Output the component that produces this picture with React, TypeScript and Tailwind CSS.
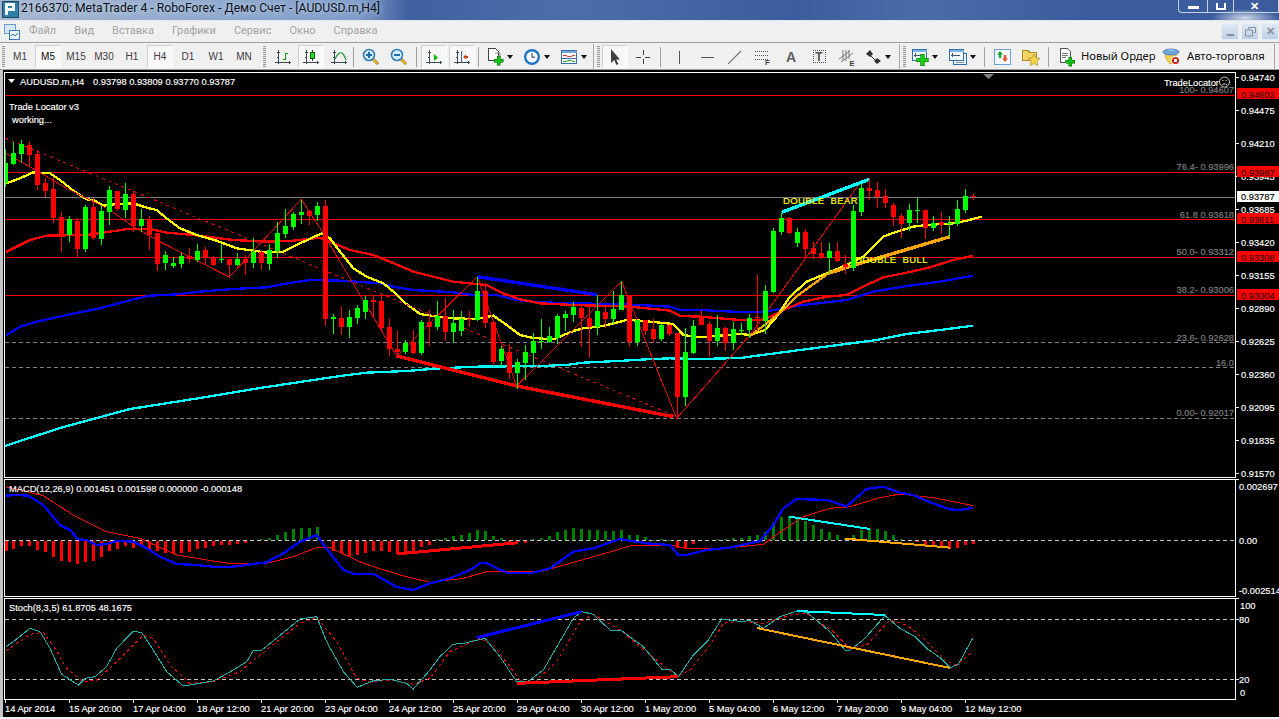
import React from "react";

type P = [number, number];
const zm = (ox: number, oy: number, a: P[]) => a.map(([x, y]) => `${ox + x / 3},${oy + y / 3}`).join(" ");
const join = (...s: string[]) => s.join(" ");
const C = "crispEdges" as const;

// [up?, high, top, bottom, low] in zoomed pixels, grouped by crop origin
const seg1: number[][] = [[1,58,100,158,170],[1,36,68,102,106],[1,30,42,72,96],[0,34,44,75,110],[0,60,72,164,180],[0,145,158,183,202],[0,145,177,264,280],[0,245,261,316,366],[1,258,267,316,336],[0,265,273,357,382],[1,225,231,357,366],[0,205,231,325,330],[1,225,243,327,345],[1,168,180,245,285],[0,183,183,237,243],[1,159,192,240,264],[0,183,192,288,306],[1,237,267,288,306],[0,258,267,315,360],[0,308,309,402,423],[1,363,375,399,420],[1,381,399,408,414],[1,369,378,402,414],[0,354,378,387,399],[1,342,363,390,396],[0,351,360,384,405],[0,378,384,405,408],[1,342,387,390,399],[0,387,387,405,441],[1,369,387,405,408],[0,375,387,399,435],[1,324,366,399,414],[0,360,366,399,420],[1,342,360,402,420],[1,276,309,363,384],[1,237,288,312,324],[1,246,252,291,300],[1,210,246,255,282],[0,240,243,258,285],[1,216,228,255,273],[0,210,228,567,588],[1,552,561,567,612]];
const seg2: number[][] = [[0,171,204,231,255],[1,180,201,231,264],[1,165,174,204,222],[1,138,150,186,207],[0,138,150,156,198],[0,138,153,234,243],[0,207,231,297,318],[0,243,297,305,321],[1,270,279,306,312],[0,240,276,309,312],[1,210,216,309,315],[0,180,216,231,288],[1,153,198,231,240],[0,144,198,246,273],[1,180,219,246,279],[1,183,207,243,258],[0,183,207,210,231],[1,81,123,210,213],[0,99,123,219,234],[0,210,216,336,348],[1,288,297,333,351],[0,282,306,369,387],[1,327,336,369,417],[1,285,306,339,390],[1,249,273,309,345],[1,207,273,276,297],[1,231,258,276,279],[1,192,198,264,282],[1,183,192,204,243],[1,156,171,195,216],[0,165,174,204,291],[0,165,204,231,321],[1,135,183,231,255],[0,168,186,207,234],[1,123,177,207,222],[1,93,135,180,180],[0,135,138,276,291],[1,210,210,276,288],[0,210,210,243,255],[0,207,237,267,279],[1,222,225,267,273],[0,222,225,252,258],[0,249,249,441,507],[1,234,306,441,468],[1,210,228,309,312]];
const seg3: number[][] = [[0,120,140,165,165],[0,153,162,212,260],[1,135,174,213,228],[0,170,174,219,243],[1,155,177,219,240],[1,160,179,181,195],[1,132,144,180,204],[0,15,141,144,184],[1,45,63,153,192]];
const seg4: number[][] = [[1,205,213,396,400],[1,160,174,216,225],[0,170,174,219,222],[1,204,216,249,261],[0,207,216,267,291],[0,246,264,282,297],[0,246,279,294,297],[1,249,273,294,342],[0,246,273,303,306],[0,285,312,321,342],[1,135,153,324,333],[1,72,84,156,168],[0,54,84,93,120],[0,66,90,111,144],[0,87,108,129,144],[0,129,135,171,198],[0,159,168,192,234],[1,132,150,189,213],[1,114,150,153,189],[0,150,150,204,237],[1,168,189,204,213],[0,156,186,195,222],[1,168,189,192,231],[1,120,147,192,198],[1,87,108,150,159],[0,102,108,111,120]];
const candles = [
  ...seg1.map((c) => ({ c, o: 130 })),
  ...seg2.map((c) => ({ c, o: 250 })),
  ...seg3.map((c) => ({ c, o: 270 })),
  ...seg4.map((c) => ({ c, o: 160 })),
];

const yellow = join(
  zm(0, 130, [[18,160],[60,145],[100,127],[150,130],[180,150],[215,178],[260,208],[280,210],[310,227],[350,222],[400,220],[440,233],[470,240],[500,265],[540,295],[590,315],[650,332],[710,355],[760,362],[800,368],[850,365],[900,340],[965,310],[990,325],[1020,365]]),
  zm(340, 250, [[40,55],[80,80],[130,100],[160,125],[190,155],[240,192],[280,198],[340,205],[410,207],[460,197],[500,225],[540,255],[580,264],[640,268],[700,243],[730,235],[790,228],[860,210],[900,212],[1000,222],[1030,255],[1080,262]]),
  zm(740, 160, [[0,522],[30,525],[75,510],[110,470],[150,410],[200,365],[260,340],[320,315],[370,290],[430,230],[470,215],[520,200],[560,195],[640,190],[680,182],[725,170]])
);
const redMa = join(
  zm(0, 130, [[18,366],[50,350],[90,330],[140,317],[260,315],[330,305],[390,296],[450,297],[500,308],[580,315],[700,330],[800,335],[870,333],[960,323],[990,335]]),
  zm(340, 250, [[30,0],[100,15],[150,35],[220,65],[340,95],[440,105],[490,130],[540,148],[600,160],[700,165],[870,170],[990,182],[1020,198],[1080,200]]),
  zm(740, 160, [[0,480],[70,480],[130,450],[190,425],[260,410],[320,405],[380,375],[430,352],[500,338],[570,322],[640,300],[700,287]])
);
const blueMa = join(
  zm(0, 130, [[18,617],[60,590],[110,575],[200,555],[300,535],[400,508],[450,497],[530,493],[600,485],[700,477],[800,472],[850,462],[930,450],[1020,452]]),
  zm(340, 250, [[50,95],[120,100],[170,112],[220,120],[340,127],[400,135],[470,135],[530,150],[600,157],[720,160],[900,165],[990,170],[1020,180],[1080,180]]),
  zm(740, 160, [[0,456],[70,456],[130,445],[190,435],[320,420],[400,395],[500,378],[600,365],[700,347]])
);
const cyanMa = join(
  "5,446 60,428 130,409 200,398 260,388 320,379",
  zm(340, 250, [[0,378],[80,368],[200,363],[300,355],[410,350],[600,348],[680,345],[730,338],[850,332],[920,328],[990,325],[1080,327]]),
  "740,358 800,350",
  zm(740, 160, [[410,540],[500,522],[600,510],[700,497]])
);
const zig = join(
  zm(0, 130, [[18,70],[115,125],[200,175],[330,240],[400,290],[470,330],[688,441],[904,208],[970,310],[1020,395]]),
  zm(340, 250, [[170,318],[412,80],[530,408],[845,95],[1010,505]]),
  "750,335 860,183"
);
const macdBlue = join(
  zm(0, 475, [[18,62],[50,60],[85,62],[130,90],[180,150],[210,165],[235,193],[260,195],[290,210],[320,207],[350,198],[400,200],[440,220],[480,245],[530,267],[590,270],[640,275],[700,275],[760,267],[800,262],[850,235],[900,200],[950,180],[975,215],[1030,285],[1060,296],[1120,296],[1190,336],[1240,345]]),
  zm(430, 475, [[0,325],[60,310],[120,285],[150,265],[170,265],[230,293],[300,295],[360,280],[430,230],[490,220],[570,192],[650,205],[720,210],[745,240],[770,240],[830,225],[900,218],[990,198],[1030,150],[1060,100],[1100,72],[1190,75],[1250,95]]),
  zm(850, 475, [[0,85],[50,42],[100,35],[150,53],[190,60],[240,82],[300,103],[330,105],[370,98]])
);
const macdRed = join(
  zm(0, 475, [[18,35],[130,62],[220,120],[320,170],[420,190],[530,240],[620,255],[700,267],[800,265],[880,245],[950,218],[990,218],[1090,265],[1200,300]]),
  zm(430, 475, [[0,322],[100,310],[170,290],[240,290],[340,288],[420,265],[560,225],[600,213],[720,210],[780,222],[900,218],[1000,208],[1060,165],[1120,125],[1200,100]]),
  zm(850, 475, [[0,95],[90,68],[150,57],[250,68],[370,92]])
);
const stTeal = join(
  zm(0, 475, [[18,515],[40,500],[90,460],[120,470],[150,520],[185,598],[235,630],[255,610],[285,605],[320,575],[350,520],[400,468],[425,473],[450,510],[500,590],[550,633],[570,630],[640,618],[700,585],[740,560],[760,526],[785,526],[900,432],[950,425],[980,500],[1030,590],[1072,637],[1120,617],[1170,613],[1220,625],[1240,642]]),
  zm(430, 475, [[0,585],[30,545],[68,508],[100,505],[165,490],[210,545],[260,620],[295,618],[340,585],[430,430],[455,410],[490,418],[540,465],[575,467],[640,515],[695,582],[720,582],[745,605],[790,540],[835,495],[875,432],[935,440],[960,436],[1000,460],[1050,425],[1100,408],[1130,412],[1200,470],[1245,525]]),
  zm(850, 475, [[0,525],[40,495],[105,422],[150,460],[195,485],[230,520],[270,548],[300,578],[325,568],[368,490]])
);
const stRed = join(
  zm(0, 475, [[18,527],[90,478],[130,472],[165,520],[200,580],[250,620],[290,615],[340,570],[430,480],[460,490],[510,570],[570,625],[640,620],[720,590],[780,540],[900,445],[950,428],[1010,500],[1070,610],[1110,622],[1170,615],[1240,628]]),
  zm(430, 475, [[0,610],[60,530],[150,490],[190,510],[270,615],[310,625],[380,560],[450,440],[490,418],[570,465],[650,530],[740,605],[780,585],[840,510],[880,445],[930,438],[1000,445],[1090,418],[1130,415],[1210,470],[1260,520]]),
  zm(850, 475, [[0,520],[50,510],[120,435],[170,450],[220,490],[290,560],[320,570],[368,530]])
);

// MACD histogram: zoom y per bar; zero line sits at 196
const hist = [228,222,213,213,226,232,246,258,262,267,261,258,246,228,222,213,219,216,222,228,234,237,234,232,222,219,214,211,210,207,204,196,193,190,180,171,162,159,158,156,196,228,234,243,240,234,228,228,231,238,237,234,216,210,192,190,183,180,174,165,168,183,189,205,199,204,192,189,183,171,165,159,162,165,165,168,168,165,180,180,186,195,192,194,220,222,208,196,196,192,192,189,189,183,180,171,144,126,123,132,138,150,162,171,180,190,180,165,162,162,168,180,192,196,201,210,212,216,222,220,210,208];

const Line = ({ p, c, w = 2, d }: { p: string; c: string; w?: number; d?: string }) => (
  <polyline points={p} fill="none" stroke={c} strokeWidth={w} strokeDasharray={d} shapeRendering={C} />
);
const Dash = ({ y }: { y: number }) => (
  <line x1={5} x2={1235} y1={y + 0.5} y2={y + 0.5} stroke="#c8c8c8" strokeDasharray="4 3" shapeRendering={C} />
);
const Frame = ({ t, b }: { t: number; b: number }) => (
  <rect x={4.5} y={t + 0.5} width={1231} height={b - t} fill="none" stroke="#fff" shapeRendering={C} />
);
const Txt = ({ x, y, c = "#fff", a, children }: { x: number; y: number; c?: string; a?: "end"; children: React.ReactNode }) => (
  <text x={x} y={y + 3.5} fill={c} stroke={c} strokeWidth={0.15} textAnchor={a} className="text-[9.3px]">{children}</text>
);

const priceTicks: [string, number][] = [["0.94740",77],["0.94475",110],["0.94210",143],["0.93945",176],["0.93685",209],["0.93420",242],["0.93155",275],["0.92890",308],["0.92625",341],["0.92360",374],["0.92095",407],["0.91835",440],["0.91570",473]];
const tags: [string, number][] = [["0.94602",94],["0.93987",172],["0.93611",219],["0.93308",257],["0.93004",295]];
const fibs: [string, number][] = [["100- 0.94607",89],["76.4- 0.93996",166],["61.8 0.93618",214],["50.0- 0.93312",251],["38.2- 0.93006",289],["23.6- 0.92628",337],["16.0",362],["0.00- 0.92017",412]];
const times = ["14 Apr 2014","15 Apr 20:00","17 Apr 04:00","18 Apr 12:00","21 Apr 20:00","23 Apr 04:00","24 Apr 12:00","25 Apr 20:00","29 Apr 04:00","30 Apr 12:00","1 May 20:00","5 May 04:00","6 May 12:00","7 May 20:00","9 May 04:00","12 May 12:00"];

function MainChart() {
  return (
    <svg width={1276} height={408} viewBox="3 70 1276 408" className="block">
      <defs>
        <clipPath id="plot"><rect x={5} y={73} width={1230} height={404} /></clipPath>
      </defs>
      <g clipPath="url(#plot)">
        {[95, 172, 219, 257, 295].map((y) => (
          <rect key={y} x={5} y={y} width={1230} height={1} fill="#f00000" />
        ))}
        <rect x={5} y={197} width={1230} height={1} fill="#808080" />
        {[342, 367, 418].map((y) => (
          <line key={y} x1={5} x2={1235} y1={y + 0.5} y2={y + 0.5} stroke="#808080" strokeDasharray="4 3" shapeRendering={C} />
        ))}
        <Line p={cyanMa} c="#00ffff" w={2.3} />
        <Line p={blueMa} c="#0000ff" w={2.3} />
        <Line p={redMa} c="#ff0000" w={2.3} />
        <Line p={yellow} c="#ffff00" w={2.3} />
        <Line p={zig} c="#e00000" w={1} />
        <Line p="5,138 673,415" c="#e00000" w={1} d="3 4" />
        <Line p={zm(740, 160, [[30,528],[80,490],[130,450],[175,405],[265,340]])} c="#ffa500" w={2.3} />
        <Line p={zm(740, 160, [[265,340],[360,310],[630,230]])} c="#ffa500" w={3.4} />
        <Line p={zm(340, 250, [[412,80],[770,134]])} c="#0000ff" w={3.4} />
        <Line p={zm(340, 250, [[170,318],[530,408],[1000,500]])} c="#ff0000" w={3.4} />
        <Line p={zm(740, 160, [[125,157],[388,58]])} c="#00ffff" w={3.4} />
        {candles.map(({ c, o }, i) => {
          const col = c[0] ? "#00ff00" : "#ff0000";
          const y = (v: number) => Math.round(o + v / 3);
          const wx = 5 + 8 * i;
          const t = y(c[2]);
          const h = Math.max(1, y(c[3]) - t);
          return (
            <g key={i} fill={col}>
              <rect x={wx} y={y(c[1])} width={1} height={Math.max(1, y(c[4]) - y(c[1]))} />
              <rect x={wx - 2} y={t} width={5} height={h} />
            </g>
          );
        })}
      </g>
      <polygon points="983,74 994,74 988.5,79" fill="#808080" />
      <Frame t={72} b={477} />
      <text x={783} y={204} fill="#ffff00" stroke="#ffff00" strokeWidth={0.2} className="text-[9.5px] [letter-spacing:0.4px]">{"DOUBLE\u00a0\u00a0BEAR"}</text>
      <text x={855} y={263} fill="#ffff00" stroke="#ffff00" strokeWidth={0.2} className="text-[9.5px] [letter-spacing:0.4px]">{"DOUBLE\u00a0\u00a0BULL"}</text>
      <Txt x={20} y={81}>AUDUSD.m,H4</Txt>
      <Txt x={93} y={81}>0.93798 0.93809 0.93770 0.93787</Txt>
      <polygon points="8,79 15,79 11.5,83" fill="#fff" />
      <Txt x={9} y={106}>Trade Locator v3</Txt>
      <Txt x={12} y={119}>working...</Txt>
      {fibs.map(([t, y]) => (
        <Txt key={t} x={1234} y={y} c="#808080" a="end">{t}</Txt>
      ))}
      <Txt x={1164} y={82}>TradeLocator</Txt>
      <g fill="none" stroke="#fff" strokeWidth={0.8}>
        <circle cx={1224.5} cy={82} r={5} />
        <path d="M1222 85c1-1.5 4-1.5 5 0" />
      </g>
      <rect x={1222.5} y={80} width={1} height={1} fill="#fff" />
      <rect x={1225.5} y={80} width={1} height={1} fill="#fff" />
      {priceTicks.map(([t, y]) => (
        <g key={t}>
          <rect x={1236} y={y} width={3} height={1} fill="#fff" />
          <Txt x={1241} y={y}>{t}</Txt>
        </g>
      ))}
      {tags.map(([t, y]) => (
        <g key={t}>
          <rect x={1237} y={y - 6} width={42} height={11} fill="#ff0000" />
          <Txt x={1241} y={y} c="#300">{t}</Txt>
        </g>
      ))}
      <rect x={1237} y={191} width={42} height={11} fill="#fff" />
      <Txt x={1241} y={196} c="#000">0.93787</Txt>
    </svg>
  );
}

function MacdChart() {
  return (
    <svg width={1276} height={119} viewBox="3 478 1276 119" className="block">
      <Dash y={540} />
      {hist.map((h, i) => {
        if (h === 196) return null;
        const y = 475 + h / 3;
        const up = h < 196;
        return (
          <rect key={i} x={Math.max(5, 4 + 8 * i)} y={up ? Math.round(y) : 541} width={3} height={Math.max(1, up ? 540 - Math.round(y) : Math.round(y) - 541)} fill={up ? "#008000" : "#ff0000"} shapeRendering={C} />
        );
      })}
      <Line p={macdRed} c="#ff0000" w={1} />
      <Line p={macdBlue} c="#0000ff" w={2.3} />
      <Line p={join(zm(0, 475, [[1190,237]]), zm(430, 475, [[265,203]]))} c="#ff0000" w={3} />
      <Line p={join(zm(430, 475, [[1078,125]]), zm(850, 475, [[60,162]]))} c="#00ffff" />
      <Line p={join(zm(430, 475, [[1245,191]]), zm(850, 475, [[0,192],[300,218]]))} c="#ffa500" />
      <Frame t={479} b={596} />
      <Txt x={9} y={488}>MACD(12,26,9) 0.001451 0.001598 0.000000 -0.000148</Txt>
      <rect x={1236} y={479} width={3} height={1} fill="#fff" />
      <Txt x={1239} y={486}>0.002697</Txt>
      <Txt x={1239} y={540}>0.00</Txt>
      <Txt x={1239} y={590}>-0.002514</Txt>
    </svg>
  );
}

function StochChart() {
  return (
    <svg width={1276} height={103} viewBox="3 597 1276 103" className="block">
      <Dash y={619} />
      <Dash y={679} />
      <Line p={stRed} c="#ff0000" w={1} d="3 3" />
      <Line p={stTeal} c="#20b2aa" w={1} />
      <Line p={zm(430, 475, [[140,488],[455,410]])} c="#0000ff" w={3} />
      <Line p={zm(430, 475, [[260,625],[745,605]])} c="#ff0000" w={3} />
      <Line p="797,611 885,615" c="#00ffff" />
      <Line p="757,628 950,668" c="#ffa500" />
      <Frame t={598} b={699} />
      <Txt x={9} y={607}>Stoch(8,3,5) 61.8705 48.1675</Txt>
      {[598, 619, 679].map((y) => (
        <rect key={y} x={1236} y={y} width={3} height={1} fill="#fff" />
      ))}
      <Txt x={1240} y={605}>100</Txt>
      <Txt x={1239} y={619}>80</Txt>
      <Txt x={1239} y={679}>20</Txt>
      <Txt x={1240} y={692}>0</Txt>
    </svg>
  );
}

function TimeAxis() {
  return (
    <svg width={1276} height={17} viewBox="3 700 1276 17" className="block">
      {times.map((t, i) => (
        <g key={t}>
          <rect x={5 + 64 * i} y={700} width={1} height={3} fill="#fff" />
          <Txt x={5 + 64 * i} y={708}>{t}</Txt>
        </g>
      ))}
    </svg>
  );
}

/* ---------- toolbar icons ---------- */
const I = ({ s = 18, children }: { s?: number; children: React.ReactNode }) => (
  <svg width={s} height={s} viewBox={`0 0 ${s} ${s}`} className="block shrink-0">{children}</svg>
);
const Axes = () => (
  <g fill="none" stroke="#3b4a4a" shapeRendering={C}>
    <path d="M4.5 2v14M1 14.5h15M3 4h3M2.5 16.5" />
    <path d="M3 9h1M15 13l1.5 1.5L15 16" />
  </g>
);
const BarIco = () => (<I><Axes /><path d="M8.5 11.5h3V5.5h2" fill="none" stroke="#0a9a0a" strokeWidth={1.6} shapeRendering={C} /></I>);
const CandleIco = () => (<I><Axes /><path d="M10.5 2v11" stroke="#333" shapeRendering={C} /><rect x={8.5} y={4.5} width={4} height={6} fill="#20e020" stroke="#1a5a1a" shapeRendering={C} /></I>);
const LineIco = () => (<I><Axes /><path d="M5 11c2-5 5-7 7-6s3 5 4 7" fill="none" stroke="#1a9a3a" strokeWidth={1.2} /></I>);
const Mag = ({ plus }: { plus?: boolean }) => (
  <I>
    <path d="M11 11l5 5" stroke="#a67c00" strokeWidth={3} />
    <path d="M11.5 11.5l4 4" stroke="#f5c84a" strokeWidth={1.4} />
    <circle cx={7} cy={7} r={5.5} fill="#d8ecfa" stroke="#2f7fb8" strokeWidth={1.6} />
    <path d={plus ? "M4 7h6M7 4v6" : "M4 7h6"} stroke="#1f6fa8" strokeWidth={1.6} shapeRendering={C} />
  </I>
);
const ScrollIco = () => (<I><Axes /><path d="M9 6l4 3.5L9 13z" fill="#0fb60f" /></I>);
const ShiftIco = () => (<I><Axes /><path d="M8.5 3v11" stroke="#3a6ab0" shapeRendering={C} /><path d="M10 9l3-2.5V8h2v2h-2v1.5z" fill="#c8440a" /></I>);
const NewChart = () => (
  <I s={20}>
    <path d="M2.5 1.5h7l3 3v9h-10z" fill="#fff" stroke="#444" shapeRendering={C} />
    <path d="M9 6h5v5" fill="none" stroke="#888" />
    <path d="M11 9h3v3h3v3h-3v3h-3v-3H8v-3h3z" fill="#16c016" stroke="#0a7a0a" strokeWidth={0.6} shapeRendering={C} />
  </I>
);
const Clock = () => (
  <I s={18}>
    <circle cx={9} cy={9} r={8} fill="#1f74c8" />
    <circle cx={9} cy={9} r={5.6} fill="#f5f8ff" />
    <path d="M9 5v4.2h3" fill="none" stroke="#234" strokeWidth={1} />
  </I>
);
const Tmpl = () => (
  <I s={18}>
    <rect x={1.5} y={2.5} width={15} height={13} fill="#fff" stroke="#3a6ea8" shapeRendering={C} />
    <rect x={1.5} y={2.5} width={15} height={2} fill="#6fa6dc" shapeRendering={C} />
    <path d="M3 7.5h3l2 1h3l2-1h2" fill="none" stroke="#c0392b" />
    <path d="M2 10.5h14" stroke="#3a6ea8" />
    <path d="M3 13.5h3l2-1h3l2 1h2" fill="none" stroke="#23a034" />
  </I>
);
const Caret = () => (<span className="block w-0 h-0 border-x-[3.5px] border-x-transparent border-t-[4px] border-t-[#111] shrink-0" />);
const Cursor = () => (<I><path d="M5 1v14l3.2-3 2.2 5 2-1-2.2-4.6H14z" fill="#404040" /></I>);
const Cross = () => (<I><path d="M9 2v5M9 11v5M2 9h5M11 9h5" stroke="#444" shapeRendering={C} /></I>);
const VLine = () => (<I><path d="M9 3v13" stroke="#555" strokeWidth={1} shapeRendering={C} /></I>);
const HLine = () => (<I><path d="M3 9h13" stroke="#555" shapeRendering={C} /></I>);
const Trend = () => (<I><path d="M2 16L15 3" stroke="#777" strokeWidth={1.1} /></I>);
const Fib = () => (
  <I>
    <path d="M1 3.5h13M1 7.5h13M1 11.5h13" stroke="#555" strokeDasharray="1 1" shapeRendering={C} />
    <text x={11} y={17} fontSize={8} fontWeight={700} fill="#444">F</text>
  </I>
);
const LetterA = () => (<span className="text-[14px] font-bold text-[#606060] leading-none">A</span>);
const LetterT = () => (
  <span className="flex items-center justify-center w-[13px] h-[13px] border border-dotted border-[#555] relative">
    <span className="text-[12px] font-bold text-[#555] leading-none">T</span>
  </span>
);
const Channel = () => (
  <I>
    <path d="M1 11L12 3M3 14L15 5M5 2v11M8 2v11M11 2v9" stroke="#777" strokeWidth={1} />
    <text x={11.5} y={17.5} fontSize={7.5} fontWeight={700} fill="#333">E</text>
  </I>
);
const Arrows = () => (
  <I>
    <path d="M6 2L2 6l4 3 3-3zM13 10l-3 3 3 3 4-3z" fill="#333" />
    <path d="M6 7l7 7" stroke="#333" />
  </I>
);
const WinIco = ({ x = 1 }: { x?: number }) => (
  <g>
    <rect x={x + 0.5} y={2.5} width={14} height={11} fill="#f4f8fd" stroke="#2f6fae" shapeRendering={C} />
    <rect x={x + 0.5} y={2.5} width={14} height={2} fill="#7fb2e6" shapeRendering={C} />
    <path d={`M${x + 3} 6v4M${x + 2} 8h9`} stroke="#456" shapeRendering={C} />
  </g>
);
const AddWin = () => (
  <I s={20}>
    <WinIco />
    <path d="M9.5 7h3.5v4h4v3.5h-4v4H9.5v-4h-4V11h4z" fill="#19d019" stroke="#0c7f0c" strokeWidth={0.7} shapeRendering={C} />
  </I>
);
const Stack = () => (
  <I s={20}>
    <rect x={5.5} y={6.5} width={13} height={11} fill="#eaf2fb" stroke="#2f6fae" shapeRendering={C} />
    <WinIco />
    <path d="M8 15.5h8" stroke="#456" strokeWidth={0.6} />
  </I>
);
const UpDown = () => (
  <I s={18}>
    <rect x={0.5} y={1.5} width={16} height={15} rx={1} fill="#f6faff" stroke="#6aa0d8" shapeRendering={C} />
    <path d="M6 3l3 3.5H7.3V10H4.7V6.5H3z" fill="#10a83a" />
    <path d="M11 14l-3-3.5h1.7V7h2.6v3.5H14z" fill="#e2572b" />
  </I>
);
const Fav = () => (
  <I s={20}>
    <path d="M1 3h6l1.5 2H15v8H1z" fill="#f3d56a" stroke="#a88a2a" shapeRendering={C} />
    <path d="M13 7l1.9 3.8 4.1.6-3 2.9.7 4.2-3.7-2-3.7 2 .7-4.2-3-2.9 4.1-.6z" fill="#f2d34a" stroke="#a88a2a" strokeWidth={0.7} />
  </I>
);
const OrderIco = () => (
  <I s={20}>
    <path d="M2.5 1.5h7l3 3v11h-10z" fill="#fff" stroke="#555" shapeRendering={C} />
    <path d="M4 6h6M4 8h6M4 10h4" stroke="#777" shapeRendering={C} />
    <path d="M10.5 10h3v3h3v3h-3v3h-3v-3h-3v-3h3z" fill="#14c014" stroke="#0a7a0a" strokeWidth={0.6} shapeRendering={C} />
  </I>
);
const AutoIco = () => (
  <I s={20}>
    <ellipse cx={9} cy={5} rx={8} ry={3} fill="#6fa3d8" stroke="#3a6ea8" strokeWidth={0.8} />
    <path d="M5 4c1-3 7-3 8 0z" fill="#8bb8e4" />
    <path d="M3 8c2 1 10 1 12 0-1 4-3 8-6 9-3-1-5-5-6-9z" fill="#f2d24a" stroke="#c6a02a" strokeWidth={0.6} />
    <circle cx={13.5} cy={13.5} r={4.5} fill="#fff" />
    <circle cx={13.5} cy={13.5} r={3.6} fill="#d81e1e" />
    <rect x={12} y={12} width={3} height={3} fill="#fff" />
  </I>
);
const Grip = () => (
  <span className="block w-[3px] h-[21px] shrink-0 bg-[repeating-linear-gradient(to_bottom,#9a9a9a_0,#9a9a9a_1px,#e8e8e8_1px,#e8e8e8_2px)]" />
);
const Sep = () => <span className="block w-px h-[20px] bg-[#a0a0a0] shrink-0" />;
const Bound = ({ c = "" }: { c?: string }) => <span className={`block w-px h-[26px] bg-[#a8a8a8] shrink-0 ${c}`} />;
const Gap = ({ c }: { c: string }) => <span className={`block shrink-0 ${c}`} />;
const Btn = ({ on, c = "w-[28px]", children }: { on?: boolean; c?: string; children: React.ReactNode }) => (
  <span className={`flex items-center justify-center h-[23px] shrink-0 ${c}`}>
    <span className={on ? "flex items-center justify-center w-[26px] h-[23px] border border-[#d0d0d0] border-b-white border-r-white bg-[#f8f8f8]" : "flex items-center justify-center"}>{children}</span>
  </span>
);
const Drop = ({ c, children }: { c: string; children: React.ReactNode }) => (
  <span className={`flex items-center shrink-0 ${c}`}>{children}<Caret /></span>
);

const periods = ["M1","M5","M15","M30","H1","H4","D1","W1","MN"];
const menus = ["Файл","Вид","Вставка","Графики","Сервис","Окно","Справка"];

export default function App() {
  return (
    <div className="w-[1279px] h-[719px] overflow-hidden flex flex-col bg-[#f0f0f0] [font-family:'Liberation_Sans',sans-serif]">
      {/* title bar */}
      <div className="h-[21px] shrink-0 flex items-start relative bg-[radial-gradient(ellipse_34px_9px_at_1245px_18px,#cfd9e8,transparent),linear-gradient(90deg,#a4b6cf_0%,#8ea8cd_18%,#7f9bc8_28%,#3f5f9f_32%,#4d6daa_44%,#3c5c9d_62%,#4b6ba8_72%,#3a5b9c_86%,#3b5c9c_100%)] border-b border-[#dfe8f5]">
        <svg width={18} height={18} viewBox="0 0 18 18" className="block shrink-0 ml-[1px]">
          <rect x={1} y={1} width={16} height={16} fill="#2e7fa6" stroke="#1a4a68" shapeRendering={C} />
          <path d="M4 3h10v8H7v4H4zM7 6v2h4V6z" fill="#fff" fillRule="evenodd" />
        </svg>
        <span className="ml-[2px] text-[12.2px] leading-[16px] whitespace-nowrap text-[#0c1420] [font-family:'Roboto',sans-serif] [text-shadow:0_0_6px_#dfe8f4]">2166370: MetaTrader 4 - RoboForex - Демо Счет - [AUDUSD.m,H4]</span>
        <div className="ml-auto w-[101px] h-[13px] flex items-start border-b border-x border-[#c5d0e2] rounded-bl-[4px] text-white">
          <span className="w-[29px] h-[12px] flex items-center justify-center border-r border-[#c5d0e2]"><span className="block w-[11px] h-[3px] mt-[3px] bg-white" /></span>
          <span className="w-[26px] h-[12px] flex items-center justify-center border-r border-[#c5d0e2]"><span className="block w-[10px] h-[7px] border-2 border-white border-t-0" /></span>
          <span className="w-[40px] h-[12px] flex items-center justify-center text-[11px] font-bold leading-none">✕</span>
        </div>
      </div>
      {/* menu */}
      <div className="h-[21px] mt-px shrink-0 flex items-center border-b border-[#a0a0a0] pb-px">
        <svg width={16} height={16} viewBox="0 0 16 16" className="block ml-[4px] shrink-0">
          <rect x={0.5} y={0.5} width={11} height={9} fill="#d6e6f6" stroke="#6a9cd0" shapeRendering={C} />
          <rect x={5.5} y={6.5} width={10} height={9} fill="#eaf3fb" stroke="#3a7cbc" shapeRendering={C} />
          <path d="M7 12l2-2 2 2 3-3" fill="none" stroke="#2a7cc0" />
        </svg>
        <div className="flex gap-[18px] ml-[9px] text-[11px] text-[#a3a3a3] [font-family:'Roboto',sans-serif]">
          {menus.map((m) => <span key={m}>{m}</span>)}
        </div>
        <div className="ml-auto flex gap-[2px] items-center">
          {["min","res","cls"].map((k) => (
            <span key={k} className="w-[18px] h-[17px] flex items-center justify-center bg-[linear-gradient(180deg,#dfe9f5,#bdd0e6)] border border-[#e8eef6]">
              {k === "min" && <span className="block w-[7px] h-[2px] mt-[6px] bg-[#8a9098]" />}
              {k === "res" && <svg width={11} height={10} viewBox="0 0 11 10"><path d="M3.5 2.5v-2h7v5h-2M.5 3h7v6h-7z" fill="none" stroke="#8a9098" /></svg>}
              {k === "cls" && <span className="text-[11px] font-bold leading-none text-[#8a9098]">✕</span>}
            </span>
          ))}
        </div>
      </div>
      {/* toolbar */}
      <div className="h-[26px] pt-px shrink-0 flex items-center pl-[2px] text-[#404040]">
        <Grip />
        <Gap c="w-px" />
        {periods.map((p) => (
          <Btn key={p} on={p === "M5" || p === "H4"}>
            <span className={`text-[10px] ${p === "M5" ? "text-[#111]" : ""}`}>{p}</span>
          </Btn>
        ))}
        <Gap c="w-[5px]" />
        <Grip />
        <Gap c="w-[3px]" />
        <Btn><BarIco /></Btn>
        <Btn on><CandleIco /></Btn>
        <Btn><LineIco /></Btn>
        <Sep />
        <Gap c="w-[3px]" />
        <Btn><Mag plus /></Btn>
        <Btn><Mag /></Btn>
        <Gap c="w-[3px]" />
        <Sep />
        <Gap c="w-[3px]" />
        <Btn on><ScrollIco /></Btn>
        <Btn on><ShiftIco /></Btn>
        <Gap c="w-[2px]" />
        <Sep />
        <Gap c="w-[7px]" />
        <Drop c="w-[35px] gap-[1px]"><NewChart /></Drop>
        <Drop c="w-[36px] pl-[2px] gap-[3px]"><Clock /></Drop>
        <Drop c="w-[36px] pl-[3px] gap-[3px]"><Tmpl /></Drop>
        <Bound />
        <Gap c="w-[3px]" />
        <Grip />
        <Gap c="w-[1px]" />
        <Btn on><Cursor /></Btn>
        <Btn><Cross /></Btn>
        <Gap c="w-[3px]" />
        <Sep />
        <Gap c="w-[4px]" />
        <Btn><VLine /></Btn>
        <Btn><HLine /></Btn>
        <Btn><Trend /></Btn>
        <Btn><Fib /></Btn>
        <Btn><LetterA /></Btn>
        <Btn><LetterT /></Btn>
        <Btn><Channel /></Btn>
        <Drop c="w-[38px] pl-[3px] gap-[3px]"><Arrows /></Drop>
        <Bound />
        <Gap c="w-[3px]" />
        <Grip />
        <Gap c="w-[5px]" />
        <Drop c="w-[37px] gap-[1px]"><AddWin /></Drop>
        <Drop c="w-[33px] gap-[2px]"><Stack /></Drop>
        <Gap c="w-[3px]" />
        <Sep />
        <Gap c="w-[9px]" />
        <Btn c="w-[18px]"><UpDown /></Btn>
        <Gap c="w-[9px]" />
        <Btn c="w-[20px]"><Fav /></Btn>
        <Gap c="w-[7px]" />
        <Sep />
        <Gap c="w-[9px]" />
        <OrderIco />
        <span className="ml-[3px] w-[78px] shrink-0 whitespace-nowrap text-[11.2px] text-[#111] [font-family:'Noto_Sans',sans-serif]">Новый Ордер</span>
        <Gap c="w-[3px]" />
        <AutoIco />
        <span className="ml-[5px] whitespace-nowrap text-[11.2px] text-[#111] [font-family:'Noto_Sans',sans-serif]">Авто-торговля</span>
        <Bound c="ml-auto mr-[4px]" />
      </div>
      {/* chart */}
      <div className="flex-1 min-h-0 flex border-t border-[#a0a0a0]">
        <div className="w-[3px] shrink-0 bg-[#c4c4c4]" />
        <div className="flex-1 bg-black flex flex-col">
          <MainChart />
          <MacdChart />
          <StochChart />
          <TimeAxis />
        </div>
      </div>
      <div className="h-[2px] shrink-0 bg-[#f0f0f0]" />
    </div>
  );
}
